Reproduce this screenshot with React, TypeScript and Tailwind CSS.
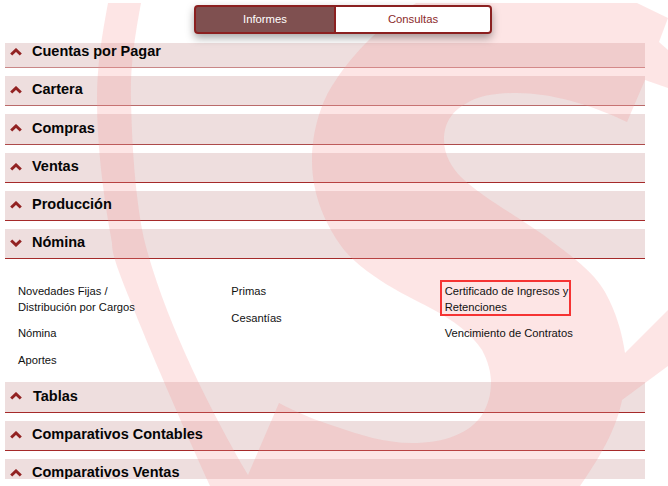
import * as React from "react";

// =============================================================================
// DATA
// =============================================================================

const rowsBefore = [
  { label: "Cuentas por Pagar", line: "border-[#c98787]" },
  { label: "Cartera", line: "border-[#ba6a6a]" },
  { label: "Compras", line: "border-[#ad4a4a]" },
  { label: "Ventas", line: "border-[#a52a2a]" },
  { label: "Producción", line: "border-[#a52a2a]" },
];

const rowsAfter = ["Tablas", "Comparativos Contables", "Comparativos Ventas"];

// =============================================================================
// COMPONENTS
// =============================================================================

// Sits over the row backgrounds as a translucent tint, text stays above it
const Watermark = () => (
  <svg className="pointer-events-none absolute inset-0" width="668" height="486" viewBox="0 0 668 486">
    <path
      fill="#f69292"
      fillOpacity="0.24"
      d="M108 3 L141 3 C134 40 130 70 131 100 C132 150 136 205 145 243 C165 320 210 410 248 475 L279 403
         C300 414 318 421 334 426 C360 435 385 443 412 443 C445 443 470 433 482 415 C494 395 494 372 482 350
         C470 332 452 320 434 310 C410 297 390 288 374 276 C358 265 347 255 339 243 C325 222 312 195 312 160
         C312 130 322 100 334 83 C355 50 385 22 416 3 L637 3 L668 18 L659 42 L668 50 L668 88 L645 80 L627 122
         C590 104 550 93 517 93 C495 93 478 96 467 103 C450 112 444 125 444 140 C444 155 452 168 461 177
         C485 200 525 220 554 243 C580 262 595 275 605 292 C616 312 622 332 625 353 L668 310 L668 366 L622 400
         C617 425 605 450 580 486 L210 486 C180 420 150 350 130 300 C118 270 112 255 112 243 C102 190 97 140 97 100
         C97 65 102 35 108 3 Z"
    />
  </svg>
);

const Chevron: React.FC<{ down?: boolean }> = ({ down }) => (
  <svg width="12" height="8" viewBox="0 0 12 8" className="shrink-0">
    <polyline
      points={down ? "1.2,1.5 6,6 10.8,1.5" : "1.2,6.5 6,2 10.8,6.5"}
      fill="none"
      stroke="#922222"
      strokeWidth="3"
    />
  </svg>
);

const SectionRow: React.FC<{ label: string; open?: boolean; line?: string; textClass?: string }> = ({
  label,
  open,
  line = "border-[#a52a2a]",
  textClass = "ml-[10px]",
}) => (
  <div className={`mb-[8px] flex h-[30.25px] items-center border-b bg-[#eedede] pb-[1px] pl-[5px] ${line}`}>
    <Chevron down={open} />
    <span className={`${textClass} relative z-20 text-[14.5px] font-bold text-[#050505]`}>{label}</span>
  </div>
);

const LinkItem: React.FC<{ children: React.ReactNode }> = ({ children }) => (
  <div className="relative z-20 mb-[11px] text-[11.2px] leading-[15.6px] text-[#111]">{children}</div>
);

export default function App() {
  return (
    <div className="relative h-[486px] w-[668px] overflow-hidden bg-white font-['Liberation_Sans',sans-serif]">
      <div className="relative z-10 ml-[194px] mt-[5px] flex h-[29px] w-[298px] rounded-[4px] text-[11.3px] shadow-[0_4px_8px_rgba(0,0,0,0.35)]">
        <div className="flex w-[142px] items-center justify-center rounded-l-[4px] border-2 border-[#8b2020] bg-[#7f5050] text-white">
          Informes
        </div>
        <div className="flex flex-1 items-center justify-center rounded-r-[4px] border-2 border-l-0 border-[#8b2020] bg-white text-[#8b2a2a]">
          Consultas
        </div>
      </div>

      <div className="ml-[5px] mt-[9px] h-[436px] w-[640px] overflow-hidden">
        <div className="-mt-[5.25px]">
          {rowsBefore.map((row) => (
            <SectionRow key={row.label} label={row.label} line={row.line} />
          ))}
          <SectionRow label="Nómina" open />

          <div className="-mt-[8px] grid h-[123px] grid-cols-3 pt-[25px]">
            <div className="pl-[13px]">
              <LinkItem>
                Novedades Fijas /
                <br />
                Distribución por Cargos
              </LinkItem>
              <LinkItem>Nómina</LinkItem>
              <LinkItem>Aportes</LinkItem>
            </div>
            <div className="pl-[13px]">
              <LinkItem>Primas</LinkItem>
              <LinkItem>Cesantías</LinkItem>
            </div>
            <div className="pl-[13px]">
              <div className="relative">
                <LinkItem>
                  Certificado de Ingresos y
                  <br />
                  Retenciones
                </LinkItem>
                <div className="absolute -left-[5px] -top-[4px] z-20 h-[36px] w-[131px] border-2 border-[#f63333]" />
              </div>
              <LinkItem>Vencimiento de Contratos</LinkItem>
            </div>
          </div>

          {rowsAfter.map((label) => (
            <SectionRow key={label} label={label} textClass={label === "Tablas" ? "ml-[11px]" : "ml-[10px]"} />
          ))}
        </div>
      </div>

      <Watermark />
    </div>
  );
}
